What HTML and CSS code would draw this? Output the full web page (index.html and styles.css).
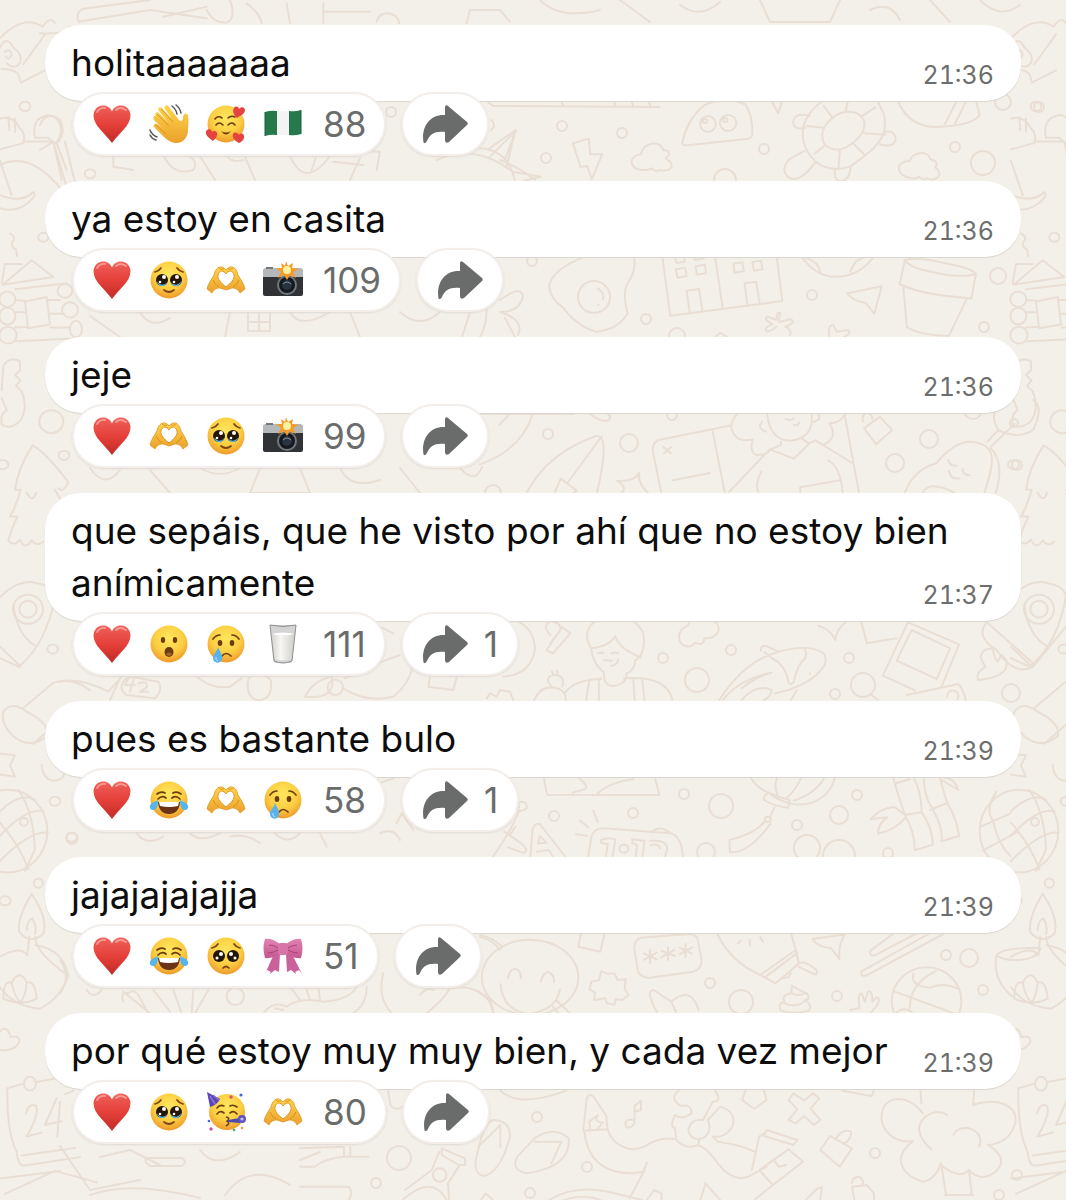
FILE: index.html
```
<!DOCTYPE html>
<html lang="es">
<head>
<meta charset="utf-8">
<meta name="viewport" content="width=device-width, initial-scale=1">
<title>Canal</title>
<link rel="stylesheet" href="styles.css">
</head>
<body>
<svg class="defs" aria-hidden="true">
<defs>
<linearGradient id="gRed" x1="0" y1="0" x2="0" y2="1"><stop offset="0" stop-color="#f0605a"/><stop offset=".5" stop-color="#e5403a"/><stop offset="1" stop-color="#c22a26"/></linearGradient>
<radialGradient id="gFace" cx=".5" cy=".35" r=".65"><stop offset="0" stop-color="#ffe75e"/><stop offset=".6" stop-color="#fcce42"/><stop offset="1" stop-color="#ee9a2c"/></radialGradient>
<linearGradient id="gHand" x1="0" y1="0" x2="0" y2="1"><stop offset="0" stop-color="#ffd54a"/><stop offset="1" stop-color="#eaa02c"/></linearGradient>
<linearGradient id="gPink" x1="0" y1="0" x2="0" y2="1"><stop offset="0" stop-color="#e183b4"/><stop offset="1" stop-color="#c4578f"/></linearGradient>
<linearGradient id="gMilk" x1="0" y1="0" x2="1" y2="0"><stop offset="0" stop-color="#d5d3cf"/><stop offset=".4" stop-color="#f8f7f4"/><stop offset="1" stop-color="#d0ceca"/></linearGradient>
<symbol id="heart" viewBox="0 0 40 40"><path d="M20 39C14 30 1.500 22 1.500 11.500C1.500 5.500 6 1.500 11 1.500C15.500 1.500 18.500 4 20 7.500C21.500 4 24.500 1.500 29 1.500C34 1.500 38.500 5.500 38.500 11.500C38.500 22 26 30 20 39Z" fill="url(#gRed)"/><path d="M5 8Q8 3 13 4M24 6Q28 2 34 6" fill="none" stroke="#f79a94" stroke-width="1.800" stroke-linecap="round"/></symbol>
<symbol id="wave" viewBox="0 0 40 40"><path d="M7 12C5 9 8 7 10 9L19 18L10 7C8 4 11 2 13 4L23 15L16 5C14 2 18 0 20 3L30 16C32 18 34 17 34 13C34 9 39 8 39 12C40 18 39 22 39 26C39 34 33 40 26 39C20 38 16 34 12 30L6 24C3 21 6 19 8 20L13 24L5 16C3 13 6 11 7 12Z" fill="url(#gHand)"/><path d="M8 10L20 22M12 5L24 18M7 21L17 30" fill="none" stroke="#de9426" stroke-width="1"/><path d="M23 2Q27 5 28 10M27 1Q31 4 32 9M1 26Q3 31 8 33M1 31Q3 35 7 36" fill="none" stroke="#55595c" stroke-width="1.500" stroke-linecap="round"/></symbol>
<symbol id="love" viewBox="0 0 40 40"><circle cx="20" cy="20" r="18.500" fill="url(#gFace)"/><path d="M9 15Q12 11 16 14M22 14Q25 11 29 13M10 21Q13 17 17 21M22 21Q26 17 29 21" fill="none" stroke="#6b3c12" stroke-width="1.600" stroke-linecap="round"/><path d="M15 27Q20 34 25 27Q20 30 15 27" fill="#6b3c12"/><path d="M31 14C28 11 26 8 28 4C30 1 33 3 33 5C35 2 39 3 39 6C39 10 35 11 31 14ZM7 37C3 34-1 32 0 27C2 24 6 25 6 28C8 26 12 27 11 31C11 33 9 35 7 37ZM33 39C29 37 26 34 27 30C29 27 32 29 33 31C35 28 39 30 38 34C37 37 35 38 33 39Z" fill="#e5433f"/></symbol>
<symbol id="nigeria" viewBox="0 0 40 40"><path d="M2 8Q8 6 14 7V31Q8 30 2 32ZM26 7Q32 8 38 6V30Q32 32 26 31Z" fill="#26794a"/><path d="M14 7H26V31H14Z" fill="#f4f4f4"/><path d="M2 8V32M38 6V30" stroke="#17613a" stroke-width="1"/></symbol>
<symbol id="tears" viewBox="0 0 40 40"><circle cx="20" cy="20" r="18.500" fill="url(#gFace)"/><circle cx="13" cy="20" r="6" fill="#241509"/><circle cx="27" cy="20" r="6" fill="#241509"/><path d="M7.500 21Q13 28 18.500 22Q16 27 13 26Q9 26 7.500 21ZM21.500 22Q27 28 32.500 21Q31 26 27 26Q24 27 21.500 22Z" fill="#58b9e8"/><circle cx="15" cy="17" r="2" fill="#fff"/><circle cx="11" cy="22" r="1.300" fill="#fff"/><circle cx="28" cy="17" r="2" fill="#fff"/><circle cx="25" cy="22" r="1.300" fill="#fff"/><path d="M6 12Q10 11 12 8M28 8Q30 11 34 12M15 30Q20 34 25 30" fill="none" stroke="#7a4514" stroke-width="1.700" stroke-linecap="round"/></symbol>
<symbol id="hands" viewBox="0 0 40 40"><path d="M1 29C2 24 5 20 8 15C9 10 12 6 16 7Q19 8 20 10Q21 8 24 7C28 6 31 10 32 15C35 20 38 24 39 29L34 33C32 29 29 28 26 28L20 30L14 28C11 28 8 29 6 33Z" fill="url(#gHand)" stroke="#dd9626" stroke-width=".8"/><path d="M20 27C15 23 11 19 12 15C13 10 18 10 20 14C22 10 27 10 28 15C29 19 25 23 20 27Z" fill="#fff" stroke="#dd9626"/><path d="M13 8Q15 10 18 9M27 8Q25 10 22 9M7 20Q9 25 13 27M33 20Q31 25 27 27" fill="none" stroke="#cf8420" stroke-width=".8"/></symbol>
<symbol id="camera" viewBox="0 0 40 40"><path d="M0 12Q0 9 3 9H37Q40 9 40 12V34Q40 36 38 36H2Q0 36 0 34Z" fill="#303236"/><path d="M0 17V11Q0 8 3 8H37Q40 8 40 11V17Z" fill="#b4b8bb"/><path d="M3 7H10V9H3Z" fill="#777"/><circle cx="24" cy="25" r="10" fill="#73787d"/><circle cx="24" cy="25" r="8" fill="#15181d"/><circle cx="24" cy="25" r="5" fill="#29333f"/><path d="M20 24Q24 20 28 24" stroke="#8493a1" fill="none"/><path d="M23 1L25 6L30 3L29 8L36 9L30 12L33 18L27 15L24 20L21 15L15 18L18 12L13 8L19 8L18 3L22 6Z" fill="#f79b24"/><circle cx="24" cy="10" r="4" fill="#fff1a0"/></symbol>
<symbol id="wow" viewBox="0 0 40 40"><circle cx="20" cy="20" r="18.500" fill="url(#gFace)"/><ellipse cx="14" cy="16" rx="2.200" ry="3" fill="#6b3c12"/><ellipse cx="26" cy="16" rx="2.200" ry="3" fill="#6b3c12"/><ellipse cx="20" cy="28" rx="4.500" ry="5" fill="#6b3c12"/><path d="M17 30Q20 27 23 30Q20 34 17 30" fill="#a4662f"/></symbol>
<symbol id="cry" viewBox="0 0 40 40"><circle cx="20" cy="20" r="18.500" fill="url(#gFace)"/><ellipse cx="14" cy="19" rx="2.300" ry="3" fill="#6b3c12"/><ellipse cx="26" cy="19" rx="2.300" ry="3" fill="#6b3c12"/><path d="M7 15Q10 11 14 11M26 11Q30 11 33 15M16 32Q20 27 25 32" fill="none" stroke="#6b3c12" stroke-width="1.700" stroke-linecap="round"/><path d="M12 23C14 28 17 31 16 35C15 40 7 40 7 34C7 30 11 28 12 23Z" fill="#57b2ed"/><path d="M10 33Q9 36 12 37" stroke="#bfe6fb" fill="none"/></symbol>
<symbol id="milk" viewBox="0 0 40 40"><path d="M7 1H33L29 37Q29 39 26 39H14Q11 39 11 37Z" fill="#d3d4d3"/><path d="M8.500 10Q20 13 31.500 10L28 35Q20 38 12 35Z" fill="url(#gMilk)"/><path d="M8.500 10Q20 7 31.500 10Q20 13 8.500 10Z" fill="#fff"/><path d="M7 1Q20 4 33 1L29 37Q20 41 11 37Z" fill="none" stroke="#8d908f"/></symbol>
<symbol id="joy" viewBox="0 0 40 40"><circle cx="20" cy="20" r="18.500" fill="url(#gFace)"/><path d="M8 14Q12 11 16 13M24 13Q28 11 32 14M9 19Q13 15 17 18M23 18Q27 15 31 19" fill="none" stroke="#6b3c12" stroke-width="1.700" stroke-linecap="round"/><path d="M9 22H31Q30 34 20 34Q10 34 9 22Z" fill="#6b3218"/><path d="M10 22H30L29 26Q20 28 11 26Z" fill="#fff"/><path d="M9 20C9 25 8 30 4 30C0 30 0 25 3 23ZM31 20C31 25 32 30 36 30C40 30 40 25 37 23Z" fill="#55b5ed"/></symbol>
<symbol id="plead" viewBox="0 0 40 40"><circle cx="20" cy="20" r="18.500" fill="url(#gFace)"/><circle cx="13" cy="20" r="6" fill="#241509"/><circle cx="27" cy="20" r="6" fill="#241509"/><circle cx="15" cy="18" r="2" fill="#fff"/><circle cx="11" cy="22" r="1.500" fill="#fff"/><circle cx="25" cy="18" r="2" fill="#fff"/><circle cx="29" cy="22" r="1.500" fill="#fff"/><path d="M6 12Q10 11 12 8M28 8Q30 11 34 12M17 32Q20 29 23 32" fill="none" stroke="#7a4514" stroke-width="1.700" stroke-linecap="round"/></symbol>
<symbol id="bow" viewBox="0 0 40 40"><path d="M17 17L8 36L4 34L2 38L10 20ZM23 17L32 36L36 34L39 38L30 20ZM17 18L16 36L12 34L7 38L13 20ZM23 18L24 36L28 34L33 38L27 20Z" fill="#c9629a"/><path d="M17 8Q9 2 2 3Q-1 12 2 22Q10 23 17 17ZM23 8Q31 2 38 3Q41 12 38 22Q30 23 23 17Z" fill="url(#gPink)"/><rect x="15" y="7" width="10" height="12" rx="3" fill="#d874a8"/><path d="M6 9Q11 9 15 12M5 17Q10 17 15 14M34 9Q29 9 25 12M35 17Q30 17 25 14" stroke="#a84378" fill="none"/></symbol>
<symbol id="party" viewBox="0 0 40 40"><circle cx="21" cy="20" r="18" fill="url(#gFace)"/><path d="M1 0L14 7Q11 13 4 15Z" fill="#5b45b8"/><path d="M4 4L9 12M7 3L13 8" stroke="#8b76dd" stroke-width="1.500"/><path d="M11 16Q14 12 18 14M24 14Q27 12 31 15M11 22Q14 18 18 21M24 21Q28 18 31 22" fill="none" stroke="#6b3c12" stroke-width="1.600" stroke-linecap="round"/><path d="M20 25Q25 26 21 29Q25 31 20 34" fill="none" stroke="#6b3c12" stroke-width="1.500"/><path d="M22 28L34 26V31L22 30Z" fill="#4a4bb0"/><circle cx="36" cy="27" r="4" fill="#5b53c4"/><circle cx="36" cy="27" r="1.600" fill="#c9c3f1"/><circle cx="25" cy="5" r="1.700" fill="#e0506a"/><circle cx="35" cy="3" r="1.600" fill="#4a67d0"/><circle cx="5" cy="37" r="1.700" fill="#d1509c"/><circle cx="3" cy="29" r="1.300" fill="#4a67d0"/><circle cx="36" cy="36" r="1.300" fill="#e9a13b"/><circle cx="28" cy="38" r="1.300" fill="#4fa87e"/></symbol>
<symbol id="share" viewBox="0 0 46 40"><path d="M23 3.500Q23 0 26 2L45 18Q46.500 19.700 45 21L27 38Q23 40 23 36V28C13 27 8 30 5 37Q3.500 40 1.500 38.500C-1 24 7 10 23 11Z" fill="#6a6c6b"/></symbol>
</defs>
</svg>

<svg class="wallpaper" viewBox="0 0 1066 1200" preserveAspectRatio="xMidYMin slice" aria-hidden="true">
<!-- doodles along the left edge; the wallpaper repeats every 1011 units -->
<g id="edge"><g transform="scale(.3333 .7653)">
<path d="M0 50Q70 18 128 35Q150 20 165 30M62 108L135 92M0 62Q20 45 40 62Q70 72 60 82Q45 92 20 83M70 84Q110 60 135 45M15 68Q30 62 35 72Q25 80 18 74M5 90Q60 90 60 105"/>
<path d="M0 155Q40 150 60 168Q78 175 70 187L0 195M25 153L28 170M45 155L45 172M70 185H160L200 245M105 180Q95 160 125 153Q160 145 180 162Q190 178 165 188L145 180ZM160 185L185 235M195 185L225 238M0 255Q60 265 95 253Q105 248 103 257Q60 280 0 272M0 210L35 255"/>
<path d="M30 305Q50 310 38 316Q30 322 48 326L52 335M5 370L15 345H65M8 372L95 340L160 362ZM45 378L200 370M75 394L140 388L150 424L84 429ZM45 392L75 393M45 408H78M45 428L85 427M45 446L240 442M145 392H180M150 410H192M152 428H210"/>
<ellipse cx="22" cy="391" rx="24" ry="10"/><ellipse cx="22" cy="413" rx="24" ry="11"/><ellipse cx="24" cy="438" rx="26" ry="11"/><ellipse cx="195" cy="380" rx="22" ry="9"/><ellipse cx="210" cy="405" rx="24" ry="10"/><ellipse cx="228" cy="430" rx="18" ry="11"/>
<path d="M5 510L10 478Q30 465 60 472L60 484L45 490L62 497L48 504L66 512Q85 535 60 550Q30 562 5 555Q0 540 20 536L5 520"/>
<path d="M98 582Q55 610 45 640H62Q50 660 30 675H52Q35 690 25 706Q40 715 60 705Q75 720 95 706Q110 715 130 708M98 582Q135 590 205 630Q190 645 175 638M80 644Q98 658 108 644M165 640L188 658"/>
<path d="M0 780Q60 755 110 762Q160 765 165 780Q140 840 60 870L0 845M40 790Q50 830 110 845M0 860L60 872"/><ellipse cx="84" cy="796" rx="45" ry="19"/><ellipse cx="84" cy="796" rx="26" ry="11"/>
<path d="M10 930Q35 915 80 930Q150 945 140 962Q90 980 40 962Q0 945 10 930ZM70 925L160 892Q220 885 270 902M100 972L170 945M0 985L45 987L30 1000L45 1015L0 1012M125 1000Q130 1020 165 1020Q200 1018 190 1004"/>
<ellipse cx="24" cy="1086" rx="118" ry="54"/><path d="M0 1060Q60 1035 105 1045M0 1092Q80 1055 130 1060M0 1125Q90 1085 143 1088M55 1032Q100 1060 105 1110L75 1138M0 1075Q60 1105 85 1136"/><ellipse cx="72" cy="1074" rx="12" ry="5"/>
<path d="M95 1168Q50 1200 58 1218Q90 1235 130 1220Q145 1200 95 1168ZM80 1215Q82 1202 97 1200Q112 1210 105 1220M0 1250Q60 1235 82 1248L88 1224M106 1224Q105 1245 205 1275Q180 1305 120 1318Q40 1315 0 1290M106 1235Q190 1240 205 1275M10 1305Q10 1280 35 1284Q60 1265 80 1284Q105 1280 110 1305Q70 1315 10 1305ZM35 1284Q45 1305 62 1310M80 1284Q78 1300 62 1310"/>
<path d="M0 1348Q20 1338 32 1355Q60 1352 58 1362Q40 1375 0 1372M70 1416L22 1422Q20 1480 50 1505Q55 1525 75 1523L240 1512M108 1414L180 1408M65 1510L225 1500M78 1455Q88 1440 108 1445Q120 1455 80 1485L125 1480M170 1435L135 1470L185 1465M180 1440L172 1485M195 1430L220 1425M15 1560L165 1530L290 1545M0 1540L180 1530"/>
<ellipse cx="90" cy="1416" rx="18" ry="9"/><ellipse cx="75" cy="139" rx="16" ry="6"/><ellipse cx="130" cy="310" rx="15" ry="6"/><ellipse cx="154" cy="551" rx="36" ry="15"/><ellipse cx="192" cy="595" rx="16" ry="6"/><ellipse cx="8" cy="607" rx="17" ry="6"/><ellipse cx="158" cy="848" rx="16" ry="6"/><ellipse cx="165" cy="1047" rx="16" ry="6"/><ellipse cx="215" cy="1094" rx="16" ry="6"/><ellipse cx="15" cy="1177" rx="17" ry="6"/><ellipse cx="115" cy="1154" rx="14" ry="6"/><ellipse cx="270" cy="227" rx="16" ry="6"/>
</g></g>
<use href="#edge" x="1011"/>

<g transform="translate(40 10) scale(.3333)">
<path d="M115 35Q105 0 140 -5L330 -30M115 35L330 0L500 25M370 20L500 -10M500 0Q520 40 560 38Q590 25 570 -30M620 -20Q660 10 665 40M740 -20L750 40M850 -20V40M850 5H990M1010 35Q1015 10 1045 10Q1075 15 1078 40M1290 0L1280 40M1290 0H1380L1410 35M0 70Q70 75 90 50"/>
<path d="M0 345Q20 300 60 330Q80 370 50 400L80 480M0 420L40 395M370 435Q400 500 460 480Q480 450 430 430M560 435Q570 460 610 450M830 435L815 480M870 420L1020 425L1010 480M880 455L970 465M1350 440L1425 365L1400 470M1190 450Q1300 400 1410 480M220 435V470L280 480"/>
</g>
<g>
<path d="M0 165Q30 150 62 190M200 156L215 180M245 157L255 180M290 156Q305 190 330 156M360 158L350 180M500 160Q520 168 535 180"/>
<path d="M230 312L225 337M248 313V331H270V313M248 322H270M259 313V331M290 312Q300 330 330 312M470 312L462 337M485 290Q490 320 480 337M500 300Q520 285 523 296Q520 312 500 312Q525 320 518 335M505 318L515 337M350 312L360 337M400 312Q420 330 440 312M140 312Q150 330 170 318M90 316L120 337"/>
<path d="M90 468Q105 490 120 470M150 470L170 493M200 468Q220 480 240 468M260 468L250 493H310L300 468M340 468Q350 490 380 480M400 468L420 493M460 468Q475 485 482 467"/>
</g>
<g transform="translate(60 600) scale(.3333)">
<path d="M0 245Q60 230 145 275L190 225M150 300L180 235M190 245Q200 225 240 235L295 245Q310 270 285 295L200 285Q175 270 190 245ZM205 235L195 255H225M222 235L210 275M235 250Q265 240 260 262L240 275H265M410 230Q460 270 510 260L545 235M565 235Q555 300 600 300Q640 295 632 240Q600 210 565 235ZM735 290Q760 240 815 230Q830 300 735 290ZM850 265Q920 310 1000 290Q1050 250 1060 190M855 235Q920 200 1020 165M1110 232L1105 260L1180 270L1190 232M1280 295L1290 280L1310 290L1320 270L1350 275L1360 300M960 80L1000 100M1375 65Q1425 90 1425 150Q1410 225 1330 230"/>
<circle cx="826" cy="262" r="23"/><circle cx="36" cy="715" r="17"/>
<path d="M230 700Q260 740 310 710M390 700Q420 730 480 700M510 710Q560 700 600 730M640 695Q680 740 720 700M930 560L1000 535M1010 670L1025 640L1060 690M780 700L800 740M960 700Q1000 680 1020 720"/>
</g>
<g transform="translate(60 920) scale(.3333)">
<path d="M0 120Q35 170 0 220M80 210Q100 240 125 210M190 215L270 280M190 245Q180 215 205 220Q220 205 235 225L265 280M280 210L330 275M340 210L365 280M400 210L395 280M445 210L405 280M610 280Q640 240 680 260Q720 230 790 245Q870 240 890 200M645 265L670 270M690 200L720 240M740 210L750 240M775 200L780 240M920 200Q920 260 870 285M970 160Q950 230 995 280M1100 280Q1150 240 1170 205Q1240 190 1290 240L1300 280M1080 225Q1100 200 1120 210M1260 50Q1300 60 1320 90"/>
<circle cx="526" cy="229" r="26"/>
</g>

<g transform="translate(480 90) scale(.3737 .3333)">
<path d="M15 30L35 48L480 51M218 30L222 48M358 30L362 48M405 30L410 48M450 30L456 48M30 90Q45 105 30 120M25 175L96 120L67 208M0 175Q75 180 93 270M90 246L162 260L118 272M249 160L291 146L295 193L327 193L299 268L287 228L269 231Z"/>
<path d="M429 239C400 235 395 198 431 193C435 155 485 150 490 180Q517 182 497 206C525 220 515 248 480 240Q468 248 460 235Q449 243 429 239Z"/><path d="M541 160Q553 90 598 47Q650 15 710 43Q730 75 729 135Q725 147 707 148L557 166Q542 167 541 160Z"/>
<ellipse cx="610" cy="102" rx="21" ry="24"/><ellipse cx="664" cy="99" rx="22" ry="24"/><circle cx="602" cy="93" r="6"/><circle cx="656" cy="90" r="6"/>
<path d="M779 30L798 70L808 35M920 30Q850 85 867 160C885 225 935 250 990 230C1040 190 1100 150 1080 70L1062 30M925 105C950 70 975 58 1010 70C1040 90 1035 130 990 165Q950 195 920 160Q910 130 925 105M985 30L978 65M1058 52L1020 80M1085 134L1028 130M1027 192L1000 162M959 238L963 182M895 191L922 167M875 108L920 113M920 48L944 85M882 78Q840 65 838 98Q840 120 870 114M1085 125Q1112 120 1112 150Q1105 175 1070 163M868 183L825 210Q800 250 835 267Q865 270 898 215M950 236Q945 268 965 275Q990 270 992 230"/>
<path d="M1117 30Q1150 120 1235 110Q1320 105 1337 75L1327 30M1277 30L1244 102M1300 35L1270 104M1150 263C1118 260 1105 215 1150 213C1155 185 1200 180 1205 208Q1230 215 1218 232C1245 255 1220 275 1195 265Q1185 272 1175 260Q1165 270 1150 263Z"/>
</g>
<g transform="translate(480 240) scale(.3737 .3333)">
<path d="M280 50Q190 90 185 140Q190 180 220 200Q260 260 310 275Q370 270 395 220Q380 160 395 130Q420 90 412 50M315 145Q335 160 329 178M316 194h1"/>
<path d="M488 50L509 227L809 183L794 50M629 50L649 202M561 216L553 152L586 147L595 211M715 192L708 130L739 125L748 187M524 88L549 83L553 108L529 113ZM577 79L602 74L605 100L580 104ZM678 71L702 67L706 94L681 98ZM729 66L752 62L756 88L733 92ZM521 50L526 69L549 65L545 48M571 48L575 60L600 55"/>
<path d="M860 48Q900 115 960 110Q1020 105 1055 48M875 55Q905 65 910 95M1030 50Q1015 60 1005 65L990 95M983 160L1075 139L1055 221L1032 188Q1000 185 983 160ZM1137 60Q1170 50 1240 68Q1320 85 1327 102Q1290 115 1220 98Q1150 85 1137 60ZM1137 60L1123 132Q1180 165 1315 175L1327 102M1133 143L1142 260Q1170 285 1255 287L1303 175"/>
<path d="M799 247L803 220Q795 210 793 240L770 230Q755 235 783 253Q755 265 768 274Q780 275 793 260M805 245L830 238Q850 245 817 260Q835 270 830 285M935 290Q930 255 945 256L955 275L985 270Q995 280 975 290M630 290L643 278L660 290"/>
</g>
<g transform="translate(480 400) scale(.3737 .3333)">
<path d="M5 42H250M140 45Q110 150 0 193M77 45L52 74M292 40Q325 70 345 60Q355 45 335 38M125 278Q180 160 310 108Q350 100 313 278M325 110L236 246M200 278L216 236L259 272L250 278M367 243Q415 245 426 218Q422 250 449 278M367 243Q395 260 380 278"/>
<path d="M485 278L462 150Q462 128 478 120L673 76M622 92L655 278M490 140L510 160M511 142L492 160M516 241L615 219M690 40Q655 80 690 115Q710 125 730 118Q720 155 740 165Q770 165 775 150L805 135V125M768 40Q775 120 830 122Q895 115 887 40M755 65Q740 85 765 95M893 65Q915 60 905 40M978 40Q965 70 935 70Q960 115 918 135M860 115L880 130L898 121L996 189M880 132L840 176L775 148L665 278M753 215Q735 250 745 278M932 182Q965 200 970 278M857 278V262L963 241M975 40L1014 278M817 57Q830 65 840 55M840 75Q850 80 855 67"/>
<path d="M1028 85L1070 50L1103 90L1060 133ZM1025 65Q1020 45 1035 38Q1050 42 1050 58M1137 278Q1160 210 1220 190Q1270 125 1310 125C1390 130 1375 190 1350 278M1367 145Q1405 190 1380 278M1253 180Q1255 198 1274 197M1255 213Q1260 240 1283 235M1292 207Q1290 225 1310 226M1185 278Q1200 240 1270 278M1358 125L1387 90Q1365 50 1385 20M1387 90Q1440 120 1480 90Q1510 20 1480 0M1367 140L1430 72"/>
</g>
<g transform="translate(480 600) scale(.3737 .3333)">
<path d="M188 105Q165 80 188 63Q220 70 215 90L188 130M220 82L242 100L195 160L178 150ZM308 63Q270 100 298 145Q300 190 332 218Q330 260 358 258Q395 250 392 220Q415 210 415 182Q445 160 437 100Q430 80 410 63M362 108Q345 140 298 145M362 108Q370 145 430 172M315 160Q325 155 330 160M352 160Q360 155 370 160M332 180L352 182M370 178Q370 195 350 198M228 278Q250 240 325 236M385 235Q500 225 515 300M293 238L284 300M318 236V300M410 235L414 300M434 236L440 300M145 300Q165 250 210 266Q230 275 230 300M192 260Q170 235 195 225Q230 225 220 260M192 215L198 225M206 212L208 225"/>
<path d="M560 63C560 90 540 70 533 105C530 140 565 150 575 128Q600 140 600 115C640 115 650 80 625 63M752 152Q750 135 765 138L800 155M640 300Q710 180 800 155Q880 130 920 160Q930 180 920 200Q880 260 790 280M762 157Q785 180 795 185M785 176Q820 200 825 245Q830 260 840 245Q850 190 870 175Q875 160 870 150M650 300Q690 240 780 218Q740 230 700 265M700 300Q740 250 780 270Q780 290 760 300M848 270L832 300M883 220v2M905 77Q940 90 950 120Q955 85 982 63M1020 63L1035 130L1115 115M1145 67L1282 133L1235 260M1145 67L1078 227L1165 272M1155 90L1258 145L1222 237L1115 182ZM1142 285L1280 252Q1295 270 1300 300M1250 290Q1250 270 1270 272Q1285 280 1278 297M1045 282L1065 300"/>
<path d="M1355 68Q1325 110 1382 150Q1430 230 1480 200L1568 80M1358 68L1480 190M1375 145Q1340 145 1340 175L1352 200Q1325 220 1333 240Q1420 230 1408 180L1395 165L1385 185Q1370 160 1375 145"/>
</g>
<g transform="translate(480 760) scale(.3737 .3333)">
<path d="M171 52L179 104L480 105L468 52M263 52Q290 75 282 87L248 98M315 100Q350 65 410 58M103 152Q115 155 125 145Q128 125 110 125Q100 130 105 142M105 150Q90 200 35 290M65 215L110 250Q135 275 115 278L75 262M95 200L80 225M135 290L140 215Q140 190 160 192L228 290M160 228L155 250L178 248ZM152 275L185 270L195 290M303 152L315 186M267 182L290 202M257 223L287 227M290 290L298 230Q305 205 330 205L510 220Q540 230 543 290M460 215Q480 195 508 218M323 240Q345 230 362 238L355 290M323 240L325 250L342 252L337 290M407 238L440 242L435 290M407 238L408 250L420 255L417 290M455 242Q505 240 500 270L495 290M457 255Q480 250 482 265"/>
<circle cx="385" cy="266" r="12"/>
<path d="M724 52Q740 85 773 98Q790 120 840 133C900 140 940 100 950 52M773 98Q750 115 765 123Q790 140 825 143L828 120Q800 112 773 98M795 52Q785 80 797 105M860 52Q845 90 820 115M922 52Q900 100 840 122M788 142L775 173M763 182Q740 220 667 240L669 277Q720 280 778 190"/><circle cx="770" cy="178" r="8"/>
<path d="M1105 52Q1120 110 1137 165Q1165 220 1163 271L1212 254Q1210 200 1182 157Q1180 90 1160 52M1113 70L1150 58M1137 165L1180 157M1187 52Q1190 110 1205 135Q1240 200 1235 244L1282 228Q1275 170 1250 130L1230 52M1205 150L1252 128M1132 160L1108 140Q1070 145 1045 178L1090 172Q1065 190 1065 221Q1110 210 1137 175M1235 60L1280 90Q1270 55 1240 52"/>
<path d="M1382 95Q1350 150 1372 180Q1385 250 1420 290M1340 200L1420 160M1345 272L1440 215"/>
</g>
<g transform="translate(480 920) scale(.3737 .3333)">
<ellipse cx="134" cy="172" rx="129" ry="113"/><path d="M0 45Q30 50 60 80M75 175Q80 145 95 147Q110 150 109 175M163 185Q170 155 183 156Q200 165 198 187M55 193Q60 270 130 282Q205 270 214 208M0 220Q30 235 37 280M203 240L240 278M195 260L210 280M270 42L263 80L322 95L333 42M325 153L340 161L360 160L368 180L390 178L387 207L398 225L380 240L363 237L360 254L340 250L335 235L305 240L308 218L293 208L298 185L318 180Z"/>
<path d="M430 53L560 42Q578 45 582 55L593 120Q592 150 570 155L450 174Q425 170 422 150L413 85Q413 60 430 53ZM455 90V130M438 100L473 118M473 98L439 119M503 82V120M485 92L521 108M520 90L485 112M550 72V111M534 83L567 101M568 82L535 102"/>
<path d="M475 280Q440 210 465 210Q490 230 512 245Q565 195 585 270M512 245L525 278M635 42Q670 125 750 165L845 90L833 42M750 165L790 190Q820 165 853 130L845 90M765 170L850 98M853 130Q870 120 900 150Q905 165 895 163L852 140M810 175L825 172L832 160M690 70L698 62M722 60V77M750 52L757 65M890 57Q935 50 977 43Q957 75 962 118L940 85Q900 80 890 57M835 197Q860 215 875 220Q885 240 870 240Q890 255 880 272Q840 285 805 272Q795 250 815 245Q805 225 833 220ZM835 220Q850 230 870 220M815 250Q850 265 870 242"/>
<path d="M1105 42L1045 92Q1040 105 1055 107L1165 42M1200 42L1020 155Q1018 170 1033 167L1240 42M990 270L1015 265Q1010 215 1022 222L1030 245L1038 215Q1050 208 1050 245L1060 232Q1075 235 1060 260L1045 278"/><ellipse cx="1195" cy="243" rx="93" ry="101"/><path d="M1220 153Q1150 190 1150 265M1160 160Q1150 200 1205 203Q1240 185 1280 207M1110 215L1280 285M1115 278Q1130 260 1155 275"/>
<path d="M1500 85Q1400 80 1382 105Q1370 180 1425 230M1382 105Q1400 125 1460 118Q1495 110 1500 85"/>
</g>
<g transform="translate(300 1070) scale(.4885 .3333)">
<path d="M0 235Q60 230 90 230V260Q50 265 30 290L0 290M90 260H140M103 230V258M180 60L185 105Q195 125 210 110M410 62Q450 115 545 62M395 150Q430 150 430 200Q410 310 375 318Q350 310 365 240Q375 165 395 150ZM365 230L410 165V230M480 205Q520 165 550 205Q555 290 465 310Q430 300 445 260ZM480 215H535L515 280M290 235L338 265V285L325 285L290 255ZM325 290L303 340L305 390M285 245L270 300L215 360M210 390Q270 310 300 390M0 350H100Q110 370 100 390"/>
<ellipse cx="286" cy="315" rx="14" ry="20"/>
<path d="M580 180L587 85Q590 70 600 78L628 140Q625 205 660 230Q680 245 705 230Q735 200 765 207M580 182L628 178M594 178L592 155L610 135Q600 155 620 158L608 178M582 182Q590 310 680 310L705 305M710 278L702 310L675 385M668 170Q660 145 685 150V108L698 92V120L685 125M685 150Q685 175 668 172M780 108Q755 85 775 62M850 62Q865 95 845 95L825 150Q800 145 795 180Q800 215 825 205Q845 185 835 150L860 110Q895 125 885 170Q870 205 845 200L855 215Q905 225 930 245M780 108Q800 100 802 130L790 140Q775 145 768 135Q755 170 768 175L770 210Q790 240 815 225L818 205M815 225Q835 235 855 280Q890 345 925 315L955 290M925 300L940 200L950 190M955 180L1018 210L1010 225L950 198ZM1000 238L1030 275L968 345L940 300ZM955 285L970 270L980 290L995 285M820 390L830 340L860 390M510 390Q560 345 630 365Q690 385 700 390M710 390L725 360L740 370V390M370 390L380 370L395 390M540 390Q580 370 615 390M968 345L930 390"/>
<path d="M912 62L905 90L930 117L955 90L950 62M1010 70L1032 92L1050 70L1063 85L1045 115L1065 150L1052 165L1032 138L1015 160L1000 150L1018 118L1000 90ZM1065 240L1085 198L1130 235L1105 290ZM1098 205Q1110 175 1128 185Q1130 205 1115 220M1110 62L1170 78L1175 62M1275 130C1240 60 1180 80 1192 160C1200 200 1230 220 1255 213C1205 270 1240 320 1275 335Q1300 330 1312 280M1292 238Q1250 180 1280 140Q1305 115 1325 135M1270 62L1272 100M1380 62L1378 105C1430 80 1475 110 1463 165Q1450 220 1408 225C1450 260 1440 305 1400 322Q1380 320 1370 300Q1350 330 1312 285M1338 195Q1345 170 1370 175Q1400 190 1390 230M1314 295L1322 370M1370 305L1375 375M1320 375H1378M1130 340Q1130 320 1145 320Q1155 330 1152 345M1135 390L1130 350L1160 345L1175 370V390M1035 390L1060 355L1068 352L1065 390"/>
</g>
<g>
<circle cx="562" cy="126" r="5"/><circle cx="622" cy="133" r="5"/><circle cx="546" cy="158" r="5"/><circle cx="764" cy="149" r="5"/><circle cx="955" cy="147" r="5"/><circle cx="983" cy="163" r="12"/><circle cx="1003" cy="102" r="8"/><circle cx="1039" cy="107" r="5"/><circle cx="725" cy="180" r="11"/><circle cx="391" cy="112" r="5"/>
<circle cx="532" cy="261" r="5"/><circle cx="646" cy="319" r="5"/><circle cx="812" cy="295" r="5"/><circle cx="998" cy="276" r="8"/><circle cx="984" cy="327" r="5"/><circle cx="677" cy="336" r="8"/><circle cx="594" cy="297" r="16"/>
<circle cx="548" cy="434" r="5"/><circle cx="629" cy="443" r="9"/><circle cx="672" cy="415" r="5"/><circle cx="895" cy="463" r="9"/><circle cx="929" cy="439" r="9"/><circle cx="1017" cy="465" r="5"/><circle cx="973" cy="410" r="9"/><circle cx="493" cy="493" r="8"/><circle cx="1014" cy="423" r="4"/>
<circle cx="663" cy="658" r="5"/><circle cx="697" cy="680" r="12"/><circle cx="731" cy="650" r="5"/><circle cx="849" cy="658" r="5"/><circle cx="863" cy="685" r="12"/><circle cx="835" cy="694" r="5"/><circle cx="1011" cy="693" r="9"/>
<circle cx="684" cy="794" r="5"/><circle cx="721" cy="806" r="12"/><circle cx="554" cy="816" r="5"/><circle cx="633" cy="813" r="5"/><circle cx="839" cy="815" r="9"/><circle cx="797" cy="825" r="5"/><circle cx="857" cy="795" r="5"/><circle cx="706" cy="852" r="9"/><circle cx="807" cy="848" r="13"/><circle cx="839" cy="856" r="16"/><circle cx="888" cy="853" r="5"/>
<circle cx="710" cy="983" r="5"/><circle cx="741" cy="1002" r="12"/><circle cx="837" cy="996" r="5"/><circle cx="946" cy="955" r="5"/><circle cx="969" cy="958" r="9"/><circle cx="983" cy="990" r="5"/>
<circle cx="537" cy="1117" r="5"/><circle cx="587" cy="1167" r="5"/><circle cx="399" cy="1158" r="12"/><circle cx="376" cy="1183" r="5"/><circle cx="530" cy="1193" r="5"/><circle cx="875" cy="1153" r="5"/><circle cx="1017" cy="1175" r="5"/><circle cx="999" cy="1195" r="5"/>
<path d="M540 0Q560 20 600 10M620 0L650 22M680 5Q700 20 720 2M760 0L770 22H830L840 0M870 10Q890 0 900 20M930 0L950 22M980 0Q1000 20 1020 5"/>
<path d="M100 1157L130 1150L160 1165M146 1158H182Q188 1162 182 1166H150Q144 1162 146 1158M60 1146L90 1190L140 1180M200 1150Q215 1170 240 1152M225 1195Q250 1160 290 1185M300 1160L320 1152M90 1195Q130 1180 200 1198"/>
</g>
</svg>

<main class="chat">
<ul class="messages">
<li class="message">
<p class="bubble">holitaaaaaaa <time class="time">21:36</time></p>
<div class="actions"><button class="pill reactions" aria-label="88 reacciones"><svg class="emoji"><use href="#heart"/></svg><svg class="emoji"><use href="#wave"/></svg><svg class="emoji"><use href="#love"/></svg><svg class="emoji"><use href="#nigeria"/></svg><span class="count">88</span></button><button class="pill forward" aria-label="Reenviar"><svg class="arrow"><use href="#share"/></svg></button></div>
</li>
<li class="message">
<p class="bubble">ya estoy en casita <time class="time">21:36</time></p>
<div class="actions"><button class="pill reactions" aria-label="109 reacciones"><svg class="emoji"><use href="#heart"/></svg><svg class="emoji"><use href="#tears"/></svg><svg class="emoji"><use href="#hands"/></svg><svg class="emoji"><use href="#camera"/></svg><span class="count">109</span></button><button class="pill forward" aria-label="Reenviar"><svg class="arrow"><use href="#share"/></svg></button></div>
</li>
<li class="message">
<p class="bubble">jeje <time class="time">21:36</time></p>
<div class="actions"><button class="pill reactions" aria-label="99 reacciones"><svg class="emoji"><use href="#heart"/></svg><svg class="emoji"><use href="#hands"/></svg><svg class="emoji"><use href="#tears"/></svg><svg class="emoji"><use href="#camera"/></svg><span class="count">99</span></button><button class="pill forward" aria-label="Reenviar"><svg class="arrow"><use href="#share"/></svg></button></div>
</li>
<li class="message">
<p class="bubble">que sepáis, que he visto por ahí que no estoy bien anímicamente <time class="time">21:37</time></p>
<div class="actions"><button class="pill reactions" aria-label="111 reacciones"><svg class="emoji"><use href="#heart"/></svg><svg class="emoji"><use href="#wow"/></svg><svg class="emoji"><use href="#cry"/></svg><svg class="emoji"><use href="#milk"/></svg><span class="count">111</span></button><button class="pill forward" aria-label="Reenviar, 1"><svg class="arrow"><use href="#share"/></svg><span class="forwards">1</span></button></div>
</li>
<li class="message">
<p class="bubble">pues es bastante bulo <time class="time">21:39</time></p>
<div class="actions"><button class="pill reactions" aria-label="58 reacciones"><svg class="emoji"><use href="#heart"/></svg><svg class="emoji"><use href="#joy"/></svg><svg class="emoji"><use href="#hands"/></svg><svg class="emoji"><use href="#cry"/></svg><span class="count">58</span></button><button class="pill forward" aria-label="Reenviar, 1"><svg class="arrow"><use href="#share"/></svg><span class="forwards">1</span></button></div>
</li>
<li class="message">
<p class="bubble">jajajajajajja <time class="time">21:39</time></p>
<div class="actions"><button class="pill reactions" aria-label="51 reacciones"><svg class="emoji"><use href="#heart"/></svg><svg class="emoji"><use href="#joy"/></svg><svg class="emoji"><use href="#plead"/></svg><svg class="emoji"><use href="#bow"/></svg><span class="count">51</span></button><button class="pill forward" aria-label="Reenviar"><svg class="arrow"><use href="#share"/></svg></button></div>
</li>
<li class="message">
<p class="bubble">por qué estoy muy muy bien, y cada vez mejor <time class="time">21:39</time></p>
<div class="actions"><button class="pill reactions" aria-label="80 reacciones"><svg class="emoji"><use href="#heart"/></svg><svg class="emoji"><use href="#tears"/></svg><svg class="emoji"><use href="#party"/></svg><svg class="emoji"><use href="#hands"/></svg><span class="count">80</span></button><button class="pill forward" aria-label="Reenviar"><svg class="arrow"><use href="#share"/></svg></button></div>
</li>
</ul>
</main>
</body>
</html>
```
FILE: styles.css
```
* {
  box-sizing: border-box;
}

body {
  margin: 0;
  min-height: 100vh;
  position: relative;
  background: #f3f0e9;
  font-family: Inter, "Liberation Sans", sans-serif;
  color: #0d0d0d;
}

.defs {
  position: absolute;
  width: 0;
  height: 0;
}

.wallpaper {
  position: absolute;
  inset: 0;
  width: 100%;
  height: 100%;
  fill: none;
  stroke: #e9ded3;
  stroke-width: 2px;
  stroke-linecap: round;
  stroke-linejoin: round;
}

.wallpaper path,
.wallpaper circle,
.wallpaper ellipse {
  vector-effect: non-scaling-stroke;
}

.chat {
  position: relative;
  padding: 25px 45px 30px;
}

.messages {
  display: flex;
  flex-direction: column;
  gap: 25px;
  margin: 0;
  padding: 0;
  list-style: none;
}

.bubble {
  display: flow-root;
  margin: 0;
  padding: 12px 27px 12px 26px;
  border-radius: 36px;
  background: #fff;
  box-shadow: 0 1px 1px #d9d5ce;
  font-size: 37px;
  line-height: 52px;
}

/* sits at the right end of the last line of text */
.time {
  float: right;
  margin-top: 24px;
  font-size: 25px;
  line-height: 28px;
  font-variant-numeric: tabular-nums;
  color: #6c6e6d;
}

.actions {
  display: flex;
  gap: 15px;
  margin-top: -9px;
  padding-left: 27px;
}

.pill {
  display: flex;
  align-items: center;
  height: 64px;
  padding: 0 18px;
  border: 2px solid #f3eeea;
  border-radius: 32px;
  background: #fff;
  box-shadow: 0 1px 2px #dedad3;
  font-family: inherit;
  font-size: 35px;
  line-height: 44px;
  color: #6a6c6b;
}

.reactions {
  gap: 17px;
}

.count {
  padding-left: 3px;
}

.forward {
  gap: 16px;
  padding: 0 19px;
}

.emoji {
  width: 40px;
  height: 40px;
}

.arrow {
  width: 46px;
  height: 40px;
}
```
